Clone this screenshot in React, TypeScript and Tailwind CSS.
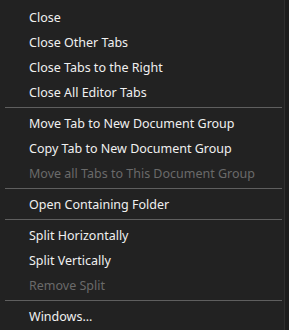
const groups: { label: string; disabled?: boolean }[][] = [
  [
    { label: 'Close' },
    { label: 'Close Other Tabs' },
    { label: 'Close Tabs to the Right' },
    { label: 'Close All Editor Tabs' },
  ],
  [
    { label: 'Move Tab to New Document Group' },
    { label: 'Copy Tab to New Document Group' },
    { label: 'Move all Tabs to This Document Group', disabled: true },
  ],
  [{ label: 'Open Containing Folder' }],
  [
    { label: 'Split Horizontally' },
    { label: 'Split Vertically' },
    { label: 'Remove Split', disabled: true },
  ],
  [{ label: 'Windows...' }],
];

export default function App() {
  return (
    <div className="flex w-[289px] h-[330px] bg-[#1c1c1c] overflow-hidden">
      <div
        className="flex flex-col w-[285px] h-full bg-[#222222] border-r border-[#2e2e2e] pt-[5px] pl-[5px] pr-[2px] text-[12.5px]"
        style={{ fontFamily: '"Noto Sans", "Open Sans", sans-serif' }}
      >
        {groups.map((group, gi) => (
          <div key={gi} className="flex flex-col">
            {gi > 0 && (
              <div className="h-[6px] pt-[2px] shrink-0">
                <div className="h-px bg-[#5f5f5f]" />
              </div>
            )}
            {group.map((item) => (
              <div
                key={item.label}
                className={`h-[25px] shrink-0 flex items-center pt-[2px] pl-[24px] whitespace-nowrap ${
                  item.disabled ? 'text-[#6a6a6a]' : 'text-[#f0f0f0]'
                }`}
              >
                {item.label}
              </div>
            ))}
          </div>
        ))}
      </div>
    </div>
  );
}
